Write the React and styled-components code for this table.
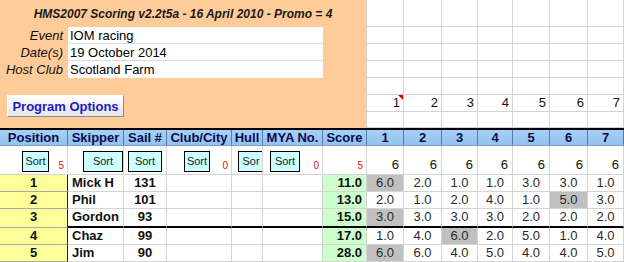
import styled, { createGlobalStyle } from 'styled-components';

const GlobalStyle = createGlobalStyle`
  body {
    margin: 0;
    background: #ffffff;
    font-family: "Liberation Sans", Arial, sans-serif;
  }
`;

const COLS = [68, 56, 43, 65, 31, 60, 44];
const RACE_COLS = [37, 38, 36, 35, 37, 38, 36];

const HEADERS = ['Position', 'Skipper', 'Sail #', 'Club/City', 'Hull', 'MYA No.', 'Score'];

const SORTS = [
  { pad: 22, width: 27, label: 'Sort', count: '5' },
  { pad: 15, width: 40, label: 'Sort' },
  { pad: 4, width: 34, label: 'Sort' },
  { pad: 17, width: 26, label: 'Sort', count: '0' },
  { pad: 6, width: 26, label: 'Sor' },
  { pad: 7, width: 30, label: 'Sort', count: '0' },
  { count: '5' },
];

const ROWS = [
  { pos: 1, name: 'Mick H', sail: 131, score: '11.0', races: ['6.0', '2.0', '1.0', '1.0', '3.0', '3.0', '1.0'], grey: 0 },
  { pos: 2, name: 'Phil', sail: 101, score: '13.0', races: ['2.0', '1.0', '2.0', '4.0', '1.0', '5.0', '3.0'], grey: 5 },
  { pos: 3, name: 'Gordon', sail: 93, score: '15.0', races: ['3.0', '3.0', '3.0', '3.0', '2.0', '2.0', '2.0'], grey: 0, cut: true },
  { pos: 4, name: 'Chaz', sail: 99, score: '17.0', races: ['1.0', '4.0', '6.0', '2.0', '5.0', '1.0', '4.0'], grey: 2 },
  { pos: 5, name: 'Jim', sail: 90, score: '28.0', races: ['6.0', '6.0', '4.0', '5.0', '4.0', '4.0', '5.0'], grey: 0 },
];

const Sheet = styled.div`
  width: 624px;
  height: 262px;
  overflow: hidden;
  font-size: 13px;
  color: #000;
`;

const Top = styled.div`
  display: flex;
  height: 128px;
`;

const Panel = styled.div`
  width: 367px;
  box-sizing: border-box;
  background: #ffcc99;
  border-right: 1px solid #d0d0d0;
  display: flex;
  flex-direction: column;
`;

const Title = styled.div`
  height: 27px;
  display: flex;
  align-items: center;
  justify-content: center;
  font-size: 12px;
  font-weight: bold;
  font-style: italic;
  color: #1a1a1a;
  padding-top: 1px;
  box-sizing: border-box;
`;

const Info = styled.div`
  display: grid;
  grid-template-columns: 68px 255px;
  grid-auto-rows: 17px;
`;

const Label = styled.div`
  text-align: right;
  font-style: italic;
  padding-right: 5px;
  line-height: 17px;
  color: #111;
`;

const Value = styled.div`
  background: #ffffff;
  border-bottom: 1px solid ${(p) => (p.$last ? '#ffffff' : '#dcdcdc')};
  box-sizing: border-box;
  padding-left: 2px;
  line-height: 17px;
`;

const OptionsButton = styled.button`
  margin: 17px 0 0 7px;
  width: 117px;
  height: 22px;
  padding: 0;
  font-family: inherit;
  font-size: 13px;
  font-weight: bold;
  color: #1c1cc4;
  background: linear-gradient(#ffffff, #e4e4ea);
  border: 1px solid;
  border-color: #ffffff #8a8a8a #8a8a8a #ffffff;
`;

const RaceTop = styled.div`
  display: grid;
  grid-template-columns: ${RACE_COLS.map((w) => `${w}px`).join(' ')};
  grid-template-rows: 27px repeat(5, 17px) 16px;
`;

const GridCell = styled.div`
  position: relative;
  box-sizing: border-box;
  border-right: 1px solid #d4d4d4;
  border-bottom: 1px solid #d4d4d4;
  text-align: right;
  padding-right: 3px;
  line-height: 16px;
  color: #111;
  &.note::after {
    content: '';
    position: absolute;
    top: 0;
    right: 0;
    border-top: 5px solid #d00000;
    border-left: 5px solid transparent;
  }
`;

const Table = styled.div`
  display: grid;
  grid-template-columns: ${[...COLS, ...RACE_COLS].map((w) => `${w}px`).join(' ')};
  grid-template-rows: 16px 29px 17px 17px 19px 17px 17px;
  border-top: 2px solid #000;
`;

const Head = styled.div`
  box-sizing: border-box;
  background: linear-gradient(#a6d0f8, #94c2ee);
  border-right: 1px solid #5a7aa8;
  border-bottom: 1px solid #7d9cc6;
  font-weight: bold;
  color: #0b0b4e;
  text-align: center;
  line-height: 15px;
  white-space: nowrap;
  overflow: hidden;
`;

const SortCell = styled.div`
  box-sizing: border-box;
  display: flex;
  padding-left: ${(p) => p.$pad || 0}px;
  border-right: 1px solid #d4d4d4;
  border-bottom: 1px solid #d4d4d4;
  overflow: hidden;
`;

const SortButton = styled.div`
  flex: none;
  align-self: flex-start;
  margin-top: 5px;
  width: ${(p) => p.$width}px;
  height: 21px;
  box-sizing: border-box;
  border: 1px solid #000;
  background: #ccffff;
  font-size: 11px;
  line-height: 19px;
  text-align: center;
  color: #222;
  overflow: hidden;
  white-space: nowrap;
`;

const Count = styled.span`
  align-self: flex-end;
  margin-left: auto;
  padding: 0 3px 3px 0;
  font-size: 10px;
  line-height: 10px;
  color: #dd1111;
`;

const Laps = styled.span`
  align-self: flex-end;
  margin-left: auto;
  padding: 0 4px 2px 0;
  line-height: 14px;
  color: #111;
`;

const Cell = styled.div`
  box-sizing: border-box;
  background: ${(p) => p.$bg || '#ffffff'};
  text-align: ${(p) => p.$align || 'center'};
  font-weight: ${(p) => (p.$bold ? 'bold' : 'normal')};
  color: ${(p) => (p.$bold ? '#111' : '#2a2a2a')};
  padding: 0 ${(p) => p.$padR || 0}px 0 ${(p) => p.$padL || 0}px;
  border-right: 1px solid ${(p) => p.$edge || '#d4d4d4'};
  border-bottom: ${(p) => (p.$cut ? '2px solid #000' : `1px solid ${p.$line || '#d4d4d4'}`)};
  line-height: 16px;
  white-space: nowrap;
  overflow: hidden;
`;

export default function App() {
  return (
    <Sheet>
      <GlobalStyle />
      <Top>
        <Panel>
          <Title>HMS2007 Scoring v2.2t5a - 16 April 2010 - Promo = 4</Title>
          <Info>
            <Label>Event</Label>
            <Value>IOM racing</Value>
            <Label>Date(s)</Label>
            <Value>19 October 2014</Value>
            <Label>Host Club</Label>
            <Value $last>Scotland Farm</Value>
          </Info>
          <div>
            <OptionsButton>Program Options</OptionsButton>
          </div>
        </Panel>
        <RaceTop>
          {Array.from({ length: 7 * 7 }).map((_, i) => {
            const row = Math.floor(i / 7);
            const col = i % 7;
            const isNum = row === 5;
            return (
              <GridCell key={i} className={isNum && col === 0 ? 'note' : ''}>
                {isNum ? col + 1 : ''}
              </GridCell>
            );
          })}
        </RaceTop>
      </Top>
      <Table>
        {HEADERS.map((h) => (
          <Head key={h}>{h}</Head>
        ))}
        {RACE_COLS.map((_, i) => (
          <Head key={`r${i}`}>{i + 1}</Head>
        ))}

        {SORTS.map((s, i) => (
          <SortCell key={`s${i}`} $pad={s.pad}>
            {s.label && <SortButton $width={s.width}>{s.label}</SortButton>}
            {s.count && <Count>{s.count}</Count>}
          </SortCell>
        ))}
        {RACE_COLS.map((_, i) => (
          <SortCell key={`sr${i}`}>
            <Laps>6</Laps>
          </SortCell>
        ))}

        {ROWS.map((r) => [
          <Cell key={`p${r.pos}`} $bg="#ffff99" $bold $edge="#222" $line="#a8a8a8">
            {r.pos}
          </Cell>,
          <Cell key={`n${r.pos}`} $bold $align="left" $padL={4} $cut={r.cut}>
            {r.name}
          </Cell>,
          <Cell key={`s${r.pos}`} $bold $cut={r.cut}>
            {r.sail}
          </Cell>,
          <Cell key={`c${r.pos}`} $cut={r.cut} />,
          <Cell key={`h${r.pos}`} $cut={r.cut} />,
          <Cell key={`m${r.pos}`} $cut={r.cut} />,
          <Cell key={`t${r.pos}`} $bg="#ccffcc" $bold $align="right" $padR={4} $cut={r.cut}>
            {r.score}
          </Cell>,
          ...r.races.map((v, i) => (
            <Cell key={`r${r.pos}-${i}`} $bg={i === r.grey ? '#c0c0c0' : '#ffffff'} $cut={r.cut}>
              {v}
            </Cell>
          )),
        ])}
      </Table>
    </Sheet>
  );
}
